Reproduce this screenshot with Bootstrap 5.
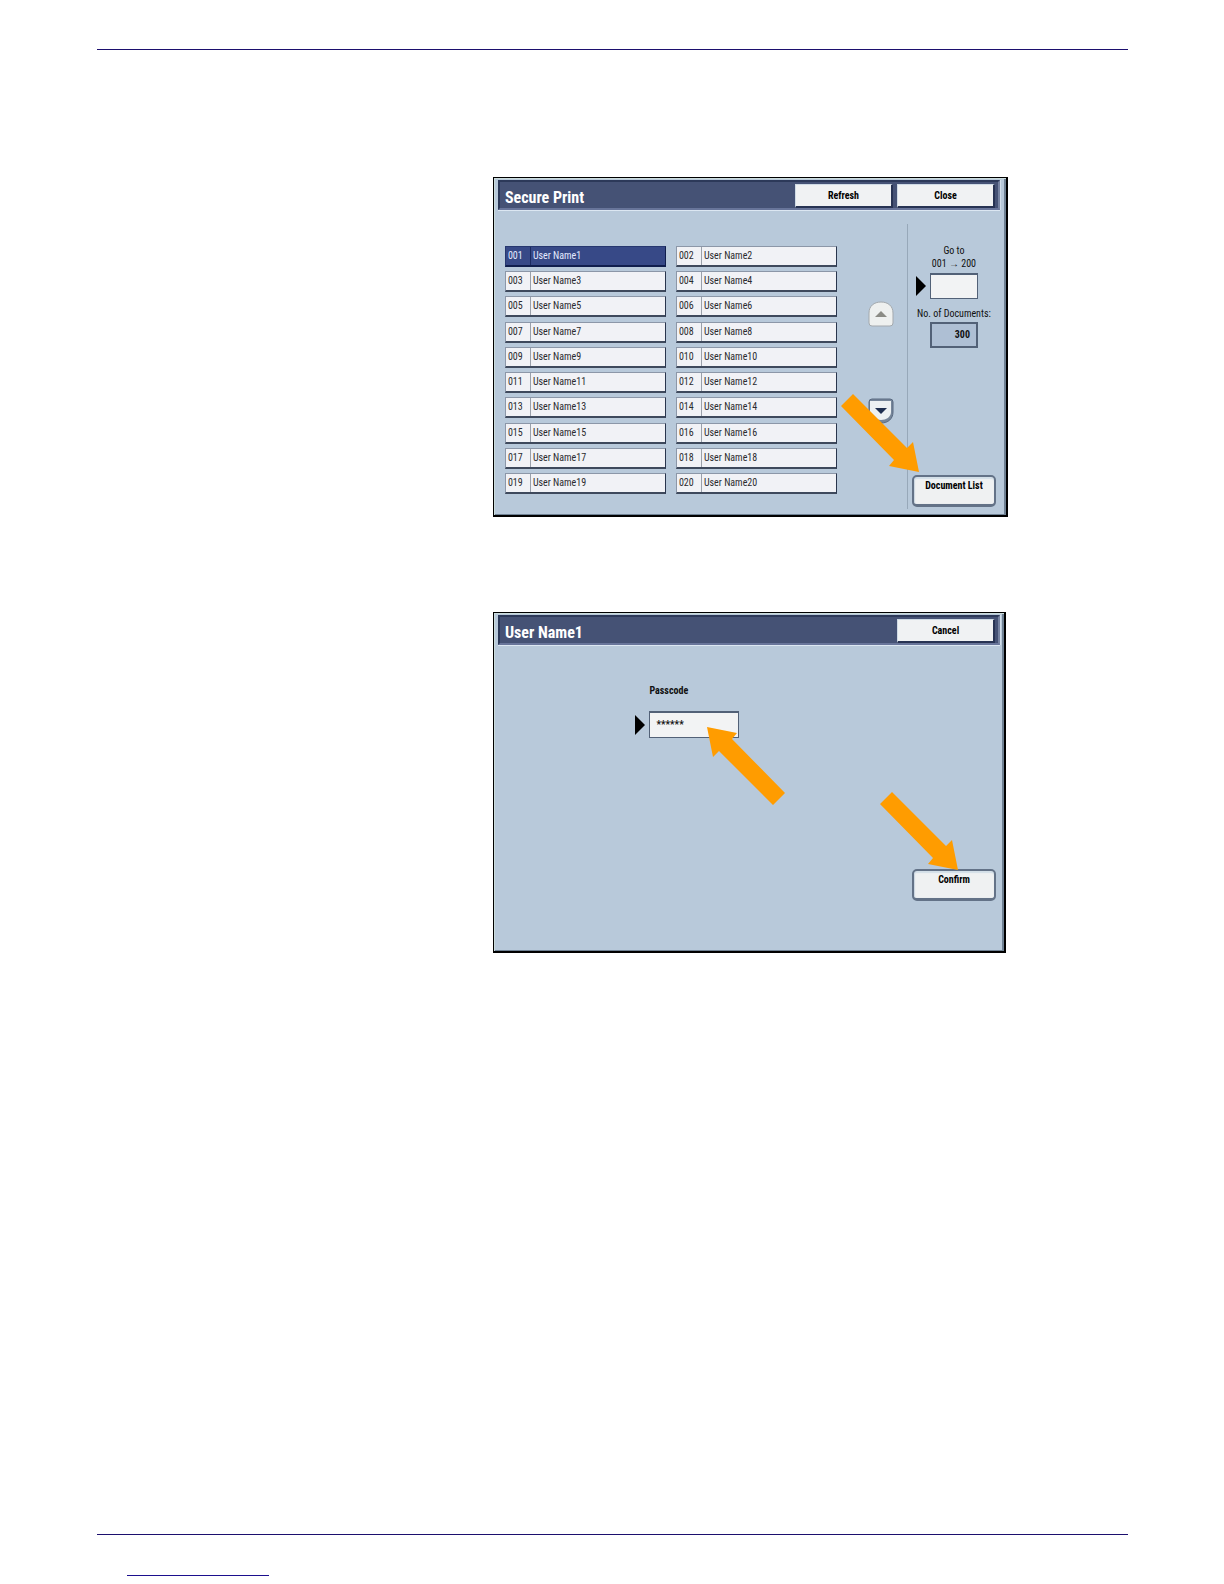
<!DOCTYPE html>
<html lang="en">
<head>
    <meta charset="UTF-8">
    <meta name="viewport" content="width=device-width, initial-scale=1.0">
    <title>Secure Print</title>
    <link rel="stylesheet" href="https://cdn.jsdelivr.net/npm/bootstrap@5.3.0/dist/css/bootstrap.min.css">
    <style>
        body {
            background: #fff;
            color: #111;
            font-family: "Roboto Condensed", Roboto, "Liberation Sans", sans-serif;
            font-size: 10px;
            line-height: 13px;
        }
        .page {
            padding: 49px 96px 8px 97px;
        }
        .page-rule {
            border-top: 1px solid #1c0f6e;
        }
        .short-rule {
            width: 142px;
            margin: 40px 0 0 30px;
            border-top: 1px solid #1c0f8e;
        }

        /* Touch screen panels */
        .screens {
            padding: 127px 0 0 38.4%;
            gap: 95px;
        }
        .screen {
            min-height: 340px;
            width: 81.1%;
            background: #b8c9da;
            border: 1px solid #000;
            border-right-width: 2px;
            border-bottom-width: 2px;
            padding: 2px 6px 3px 4px;
            box-shadow: inset 1px 1px 0 #cbdcdc, inset -2px -1px 0 #6f8193;
        }
        .passcode-screen {
            min-height: 341px;
            width: 80.8%;
            padding-right: 4px;
        }
        .title-bar {
            background: #455275;
            border: 2px solid #2c3959;
            border-right-color: #7582a0;
            border-bottom-color: #68759a;
            box-shadow: 0 1px 0 #dce7f2, 1px 0 0 #d3dfeb;
            height: 30px;
            padding: 2px 3px 0 5px;
            gap: 4px;
        }
        .title-bar h1 {
            color: #fff;
            font-size: 16px;
            font-weight: bold;
            line-height: 28px;
        }
        .bar-btn {
            width: 98px;
            height: 24px;
            padding: 0;
            background: #f0f2f3;
            border: 1px solid #cfdbe5;
            border-right: 2px solid #273353;
            border-bottom: 2px solid #273353;
            color: #000;
            font-weight: bold;
        }

        .user-list {
            display: grid;
            grid-template-columns: 1fr 1fr;
            align-content: space-between;
            gap: 4px 10px;
            padding: 36px 0 18px 7px;
        }
        .user-btn {
            height: 21px;
            padding: 0;
            background: #f1f2f6;
            border: 1px solid #8c97a8;
            border-right: 1px solid #29354d;
            border-bottom: 2px solid #3e495c;
            color: #2b2b2f;
            text-align: left;
            line-height: 18px;
        }
        .user-btn .num {
            width: 25px;
            padding-left: 2px;
            border-right: 1px solid #9aa0aa;
        }
        .user-btn .who {
            padding-left: 2px;
        }
        .user-btn.selected {
            background: #374987;
            border-color: #26376f #101e4d #101e4d #26376f;
            color: #e4eaff;
        }
        .user-btn.selected .num {
            border-color: #1b2a60;
        }

        .pager {
            width: 70px;
            padding: 91px 0 0 19px;
            gap: 71px;
        }
        .page-btn {
            width: 26px;
            height: 26px;
            padding: 0;
            border: 0;
            background: none;
            line-height: 0;
        }
        .side {
            width: 93px;
            margin: 14px 0 3px;
            padding: 20px 4px 2px;
            border-left: 1px solid #97a8b9;
        }
        .side label {
            margin-bottom: 3px;
        }
        .side-caption {
            margin: 8px 0 2px;
        }
        .field-box {
            width: 48px;
            height: 26px;
            background: #f2f3f4;
            border: 1px solid #526177;
            border-top-width: 2px;
            border-radius: 0;
            padding: 0 6px;
            color: #111;
        }
        .doc-count {
            background: #aebfd4;
            border-width: 2px;
            font-weight: bold;
            line-height: 22px;
            text-align: right;
        }
        .big-btn {
            width: 84px;
            height: 32px;
            padding: 2px 0 0;
            background: #eff1f2;
            border: 2px solid #637287;
            border-bottom-width: 3px;
            border-radius: 5px;
            box-shadow: inset 0 2px 1px #d3dfe8, inset 1px 0 1px #c9d5e0;
            color: #000;
            font-weight: bold;
            line-height: 14px;
        }
        .confirm-btn {
            margin: auto 4px 47px;
        }

        .passcode {
            padding: 39px 0 0 27.4%;
        }
        .passcode label {
            margin: 0 0 14px 14px;
        }
        .passcode-box {
            width: 90px;
            height: 27px;
            font-weight: bold;
            padding-bottom: 2px;
        }

        /* Orange pointers lie over the panels */
        .pointer {
            position: absolute;
            width: 78px;
            height: 78px;
            fill: #ff9c00;
            pointer-events: none;
        }
        .to-documents {
            right: 87px;
            bottom: 43px;
        }
        .to-confirm {
            right: 46px;
            bottom: 81px;
        }
        .to-passcode {
            right: 219px;
            bottom: 146px;
            transform: rotate(180deg);
        }
    </style>
</head>
<body>
    <svg class="d-none">
        <symbol id="pointer" viewBox="0 0 78 78">
            <path d="M12 0 L0 12 L53 66 L48 72 L78 78 L72 48 L66 54 Z"/>
        </symbol>
        <symbol id="marker" viewBox="0 0 10 20">
            <path d="M0 0 L10 10 L0 20 Z"/>
        </symbol>
    </svg>

    <div class="page d-flex flex-column min-vh-100">
        <div class="page-rule"></div>

        <main class="screens d-flex flex-column flex-grow-1">
            <!-- Secure Print -->
            <section class="screen position-relative d-flex flex-column">
                <header class="title-bar d-flex">
                    <h1 class="mb-0 me-auto">Secure Print</h1>
                    <button type="button" class="bar-btn">Refresh</button>
                    <button type="button" class="bar-btn">Close</button>
                </header>
                <div class="d-flex flex-grow-1">
                    <div class="user-list flex-grow-1" id="userList"></div>
                    <div class="pager d-flex flex-column align-items-center">
                        <button type="button" class="page-btn" aria-label="Previous page" disabled>
                            <svg width="26" height="26" viewBox="0 0 26 26">
                                <path d="M1 22 V12 C1 5 6 1 13 1 S25 5 25 12 V22 Q25 25 22 25 H4 Q1 25 1 22 Z" fill="#eef0ef" stroke="#a4a9ad"/>
                                <path d="M7 16 L13 10 L19 16 Z" fill="#8b8b85"/>
                            </svg>
                        </button>
                        <button type="button" class="page-btn" aria-label="Next page">
                            <svg width="26" height="26" viewBox="0 0 26 26">
                                <path d="M1 4 Q1 1 4 1 H22 Q25 1 25 4 V14 C25 21 20 25 13 25 S1 21 1 14 Z" fill="#76869a" stroke="#596980"/>
                                <path d="M2 3 H23 V14 C23 19 18 22 13 22 S2 19 2 14 Z" fill="#edf1f3"/>
                                <path d="M7 10 H19 L13 16 Z" fill="#1f2f50"/>
                            </svg>
                        </button>
                    </div>
                    <div class="side d-flex flex-column align-items-center">
                        <label for="goTo" class="text-center">Go to<br>001 → 200</label>
                        <div class="d-flex align-items-center justify-content-center position-relative">
                            <svg class="position-absolute end-100 me-1" width="10" height="20"><use href="#marker"/></svg>
                            <input type="text" id="goTo" class="field-box">
                        </div>
                        <div class="side-caption text-nowrap">No. of Documents:</div>
                        <div class="field-box doc-count">300</div>
                        <button type="button" class="big-btn mt-auto d-flex justify-content-center">Document List</button>
                    </div>
                </div>
                <svg class="pointer to-documents"><use href="#pointer"/></svg>
            </section>

            <!-- Passcode entry -->
            <section class="screen passcode-screen position-relative d-flex flex-column">
                <header class="title-bar d-flex">
                    <h1 class="mb-0 me-auto">User Name1</h1>
                    <button type="button" class="bar-btn">Cancel</button>
                </header>
                <div class="passcode">
                    <label for="passcode" class="d-block fw-bold">Passcode</label>
                    <div class="d-flex align-items-center">
                        <svg class="me-1" width="10" height="20"><use href="#marker"/></svg>
                        <input type="text" id="passcode" class="field-box passcode-box" value="******">
                    </div>
                </div>
                <button type="button" class="big-btn confirm-btn align-self-end d-flex justify-content-center">Confirm</button>
                <svg class="pointer to-passcode"><use href="#pointer"/></svg>
                <svg class="pointer to-confirm"><use href="#pointer"/></svg>
            </section>
        </main>

        <footer>
            <div class="page-rule"></div>
            <div class="short-rule"></div>
        </footer>
    </div>

    <script src="https://cdn.jsdelivr.net/npm/bootstrap@5.3.0/dist/js/bootstrap.bundle.min.js"></script>
    <script>
        let listHTML = "";
        for (let i = 1; i <= 20; i++) {
            const num = String(i).padStart(3, "0");
            listHTML += `<button type="button" class="user-btn d-flex${i === 1 ? " selected" : ""}">
                <span class="num">${num}</span><span class="who">User Name${i}</span>
            </button>`;
        }
        document.getElementById("userList").innerHTML = listHTML;
    </script>
</body>
</html>
